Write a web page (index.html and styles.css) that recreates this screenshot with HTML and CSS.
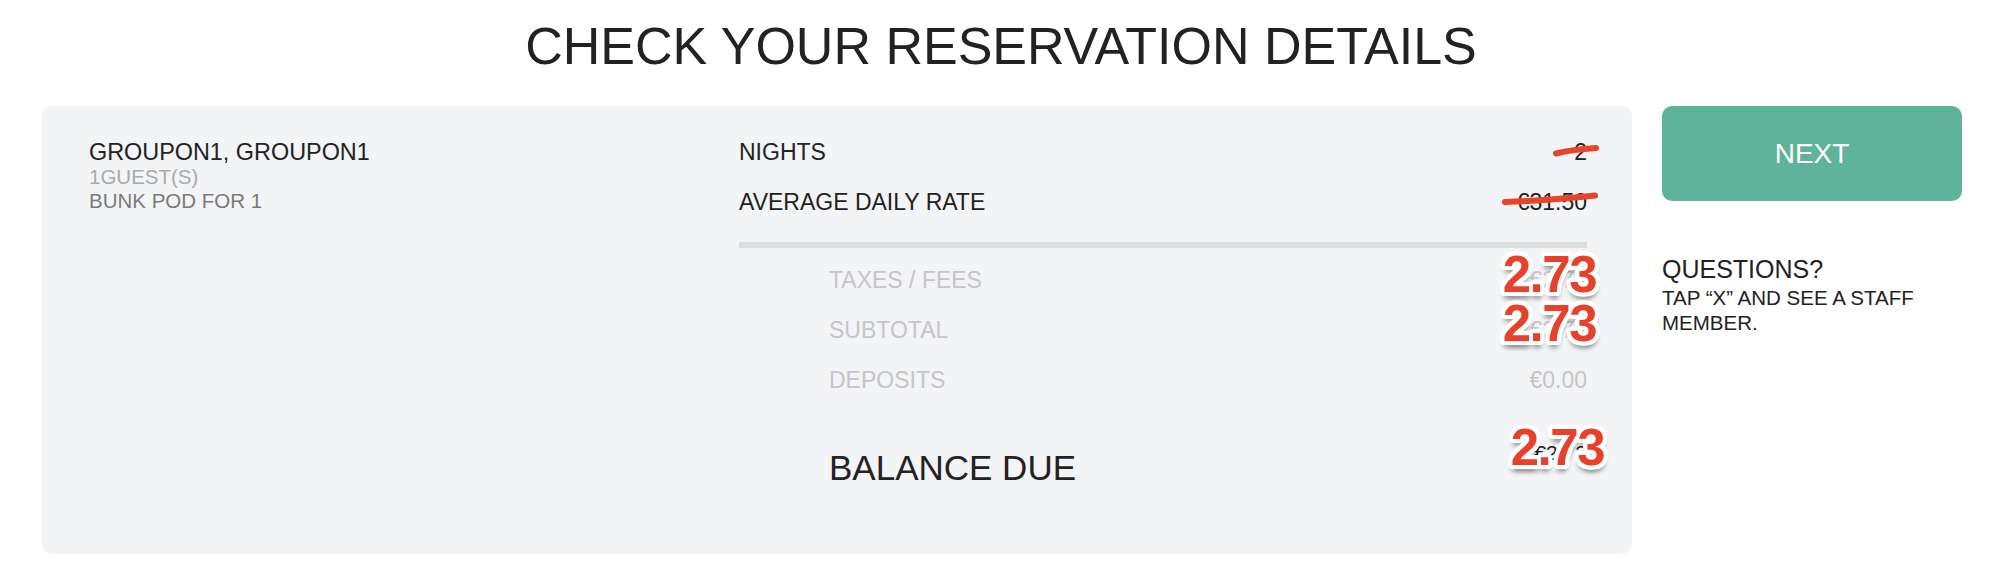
FILE: index.html
```html
<!DOCTYPE html>
<html lang="en">
<head>
<meta charset="utf-8">
<title>Check your reservation details</title>
<link rel="stylesheet" href="styles.css">
</head>
<body>
<h1 class="title">CHECK YOUR RESERVATION DETAILS</h1>
<main class="layout">
  <section class="card">
    <div class="guest">
      <div class="guest-name">GROUPON1, GROUPON1</div>
      <div class="guest-count">1GUEST(S)</div>
      <div class="guest-room">BUNK POD FOR 1</div>
    </div>
    <div class="charges">
      <div class="row">
        <span class="label">NIGHTS</span>
        <span class="value">2<svg class="strike strike-nights" width="48" height="14" viewBox="0 0 48 14"><path d="M4 10.5 Q 20 6.5 44 5" /></svg></span>
      </div>
      <div class="row row-gap">
        <span class="label">AVERAGE DAILY RATE</span>
        <span class="value">€31.50<svg class="strike strike-rate" width="98" height="16" viewBox="0 0 98 16"><path d="M4 12 Q 40 11 94 5.5" /></svg></span>
      </div>
      <div class="divider"></div>
      <div class="row sub first-sub">
        <span class="label">TAXES / FEES</span>
        <span class="value">€2.73<span class="sticker sticker-a">2.73</span></span>
      </div>
      <div class="row sub">
        <span class="label">SUBTOTAL</span>
        <span class="value">€2.73<span class="sticker sticker-b">2.73</span></span>
      </div>
      <div class="row sub">
        <span class="label">DEPOSITS</span>
        <span class="value">€0.00</span>
      </div>
      <div class="row balance">
        <span class="label">BALANCE DUE</span>
        <span class="value">€2.73<span class="sticker sticker-c">2.73</span></span>
      </div>
    </div>
  </section>
  <aside class="side">
    <button class="next">NEXT</button>
    <h2 class="questions">QUESTIONS?</h2>
    <p class="help">TAP “X” AND SEE A STAFF MEMBER.</p>
  </aside>
</main>
</body>
</html>
```

FILE: styles.css
```css
html, body {
  margin: 0;
  padding: 0;
  background: #ffffff;
}

body {
  font-family: "Liberation Sans", Helvetica, Arial, sans-serif;
  color: #222222;
  width: 1994px;
}

.title {
  margin: 16px 0 0 0;
  height: 60px;
  line-height: 60px;
  font-size: 52px;
  font-weight: normal;
  text-align: center;
  color: #222222;
  padding-left: 8px;
}

.layout {
  display: flex;
  gap: 30px;
  padding-left: 42px;
  margin-top: 30px;
}

.card {
  width: 1590px;
  height: 448px;
  box-sizing: border-box;
  background: #f3f4f6;
  border-radius: 10px;
  display: flex;
  padding: 33px 45px 0 47px;
}

.guest {
  flex: 0 0 650px;
}

.guest-name {
  font-size: 23.4px;
  line-height: 26px;
  color: #222222;
}

.guest-count {
  font-size: 20.5px;
  line-height: 24px;
  color: #aaaaaa;
}

.guest-room {
  font-size: 20.5px;
  line-height: 24px;
  color: #7a7a7a;
}

.charges {
  flex: 1;
}

.row {
  display: flex;
  justify-content: space-between;
  font-size: 23px;
  line-height: 26px;
  color: #222222;
}

.row-gap {
  margin-top: 24px;
}

.value {
  position: relative;
}

.divider {
  height: 6px;
  background: #dcdddf;
  margin-top: 27px;
}

.sub {
  padding-left: 90px;
  color: #c5c5c7;
  margin-top: 24px;
}

.first-sub {
  margin-top: 19px;
}

.balance {
  padding-left: 90px;
  margin-top: 55px;
  align-items: flex-start;
}

.balance .label {
  font-size: 35px;
  line-height: 40px;
}

.balance .value {
  margin-top: -8px;
  font-size: 21px;
}

.strike {
  position: absolute;
  overflow: visible;
}

.strike path {
  fill: none;
  stroke: #e8432b;
  stroke-width: 6;
  stroke-linecap: round;
}

.strike-nights {
  right: -13px;
  top: 4px;
}

.strike-rate {
  right: -12px;
  top: 1px;
}

.sticker {
  position: absolute;
  font-size: 51px;
  line-height: 50px;
  font-weight: bold;
  letter-spacing: -1.5px;
  color: #e8402a;
  white-space: nowrap;
  text-shadow:
    4px 0 0 #fff, -4px 0 0 #fff, 0 4px 0 #fff, 0 -4px 0 #fff,
    3px 3px 0 #fff, -3px 3px 0 #fff, 3px -3px 0 #fff, -3px -3px 0 #fff,
    4px 2px 0 #fff, -4px 2px 0 #fff, 4px -2px 0 #fff, -4px -2px 0 #fff,
    2px 4px 0 #fff, -2px 4px 0 #fff, 2px -4px 0 #fff, -2px -4px 0 #fff,
    2px 7px 4px rgba(0, 0, 0, 0.28), -2px 7px 4px rgba(0, 0, 0, 0.2);
}

.sticker-a {
  right: -9px;
  top: -17px;
}

.sticker-b {
  right: -9px;
  top: -18px;
}

.sticker-c {
  right: -17px;
  top: -17px;
}

.side {
  width: 300px;
}

.next {
  display: block;
  width: 300px;
  height: 95px;
  border: none;
  border-radius: 10px;
  background: #5eb39a;
  color: #ffffff;
  font-family: "Liberation Sans", Helvetica, Arial, sans-serif;
  font-size: 28px;
  padding: 0;
}

.questions {
  margin: 54px 0 0 0;
  font-size: 25px;
  line-height: 28px;
  font-weight: normal;
  color: #222222;
}

.help {
  margin: 2px 0 0 0;
  font-size: 20.5px;
  line-height: 25px;
  color: #222222;
  width: 290px;
}
```
